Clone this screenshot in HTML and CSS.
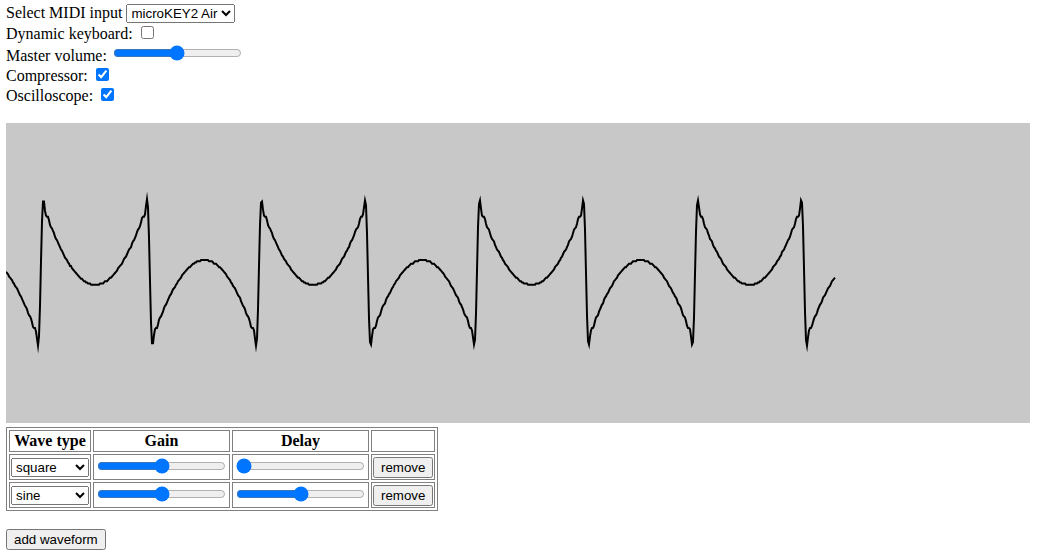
FILE: index.html
```html
<!DOCTYPE html>
<html>
<head>
<meta charset="utf-8">
<title>Synth</title>
<link rel="stylesheet" href="styles.css">
</head>
<body>
<div class="controls">
  <div class="line">Select MIDI input <select class="midi"><option>microKEY2 Air</option></select></div>
  <div class="line">Dynamic keyboard: <input type="checkbox"></div>
  <div class="line">Master volume: <input type="range" min="0" max="100" value="50"></div>
  <div class="line">Compressor: <input type="checkbox" checked></div>
  <div class="line">Oscilloscope: <input type="checkbox" checked></div>
</div>
<canvas id="scope" class="scope" width="1024" height="300"></canvas>
<table class="waves">
  <tr><th>Wave type</th><th>Gain</th><th>Delay</th><th></th></tr>
  <tr>
    <td><select class="wtype"><option selected>square</option><option>sine</option><option>sawtooth</option><option>triangle</option></select></td>
    <td><input type="range" min="0" max="100" value="50"></td>
    <td><input type="range" min="0" max="100" value="0"></td>
    <td><button>remove</button></td>
  </tr>
  <tr>
    <td><select class="wtype"><option>square</option><option selected>sine</option><option>sawtooth</option><option>triangle</option></select></td>
    <td><input type="range" min="0" max="100" value="50"></td>
    <td><input type="range" min="0" max="100" value="50"></td>
    <td><button>remove</button></td>
  </tr>
</table>
<p class="add"><button>add waveform</button></p>
<script src="script.js"></script>
</body>
</html>
```
FILE: styles.css
```css
html, body {
  background: #ffffff;
}
body {
  margin: 4px 6px;
  font-family: "Liberation Serif", "Times New Roman", serif;
  font-size: 16px;
  color: #000;
}
select, button {
  font-family: "Liberation Sans", Arial, sans-serif;
  font-size: 13.333px;
}
.scope {
  display: block;
  margin-top: 18px;
  margin-bottom: 4px;
  background: rgb(200, 200, 200);
}
.waves {
  border: 1px solid #808080;
  border-spacing: 2px;
}
.waves th, .waves td {
  border: 1px solid #808080;
  padding: 1px;
}
.wtype {
  width: 78px;
}
.add {
  margin: 18px 0 0;
}
```
FILE: script.js
```js
(function () {
  var c = document.getElementById('scope');
  var ctx = c.getContext('2d');
  var T = 218.1, x0 = 34.75, A = 77.5, B = 90, C = 149.5, N = 45;
  var q = 150 / 128;
  ctx.lineWidth = 2;
  ctx.strokeStyle = '#000';
  ctx.beginPath();
  for (var x = 0; x <= 829; x += 1) {
    var p = (x - x0) / T;
    var sq = 0;
    for (var k = 1; k <= N; k += 2) {
      var a = k / (N + 2);
      var sigma = Math.pow(Math.sin(Math.PI * a) / (Math.PI * a), 0.4);
      sq += sigma * Math.sin(2 * Math.PI * k * p) / k;
    }
    sq *= 4 / Math.PI;
    var s = Math.sin(2 * Math.PI * p);
    var sp = (s < 0 ? -1 : 1) * Math.pow(Math.abs(s), 0.85);
    var y = C - A * sq + B * sp;
    y = Math.round(y / q) * q;
    if (x === 0) ctx.moveTo(x, y); else ctx.lineTo(x, y);
  }
  ctx.stroke();
})();
```
